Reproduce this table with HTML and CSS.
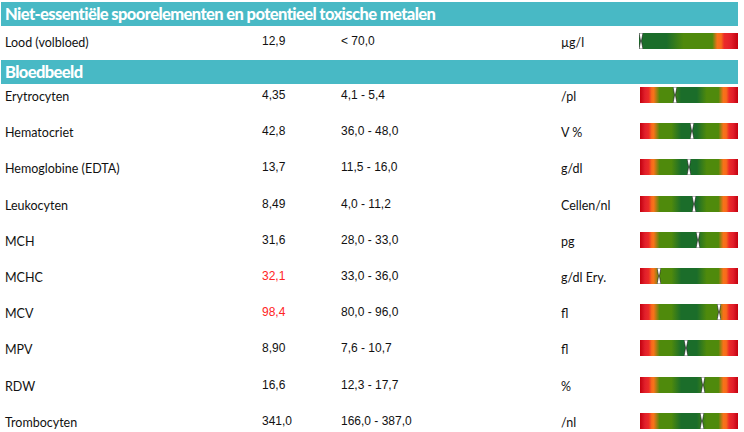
FILE: index.html
```html
<!DOCTYPE html>
<html lang="nl">
<head>
<meta charset="utf-8">
<title>Bloedbeeld</title>
<link rel="stylesheet" href="styles.css">
</head>
<body>
<div class="report">
  <div class="section-head">Niet-essentiële spoorelementen en potentieel toxische metalen</div>
  <div class="row row-first">
    <div class="label">Lood (volbloed)</div>
    <div class="value">12,9</div>
    <div class="range">&lt; 70,0</div>
    <div class="unit">µg/l</div>
    <div class="bar bar-upper"><span class="marker" style="left:2%"><svg viewBox="0 0 4 16" width="4" height="16"><polygon points="0,0 4,0 2.4,8 4,16 0,16 1.6,8" fill="#fff" stroke="#1a1a1a" stroke-width="0.6"/></svg></span></div>
  </div>

  <div class="section-head">Bloedbeeld</div>
  <div class="row">
    <div class="label">Erytrocyten</div>
    <div class="value">4,35</div>
    <div class="range">4,1 - 5,4</div>
    <div class="unit">/pl</div>
    <div class="bar"><span class="marker" style="left:36%"><svg viewBox="0 0 4 16" width="4" height="16"><polygon points="0,0 4,0 2.4,8 4,16 0,16 1.6,8" fill="#fff" stroke="#1a1a1a" stroke-width="0.6"/></svg></span></div>
  </div>
  <div class="row">
    <div class="label">Hematocriet</div>
    <div class="value">42,8</div>
    <div class="range">36,0 - 48,0</div>
    <div class="unit">V %</div>
    <div class="bar"><span class="marker" style="left:53%"><svg viewBox="0 0 4 16" width="4" height="16"><polygon points="0,0 4,0 2.4,8 4,16 0,16 1.6,8" fill="#fff" stroke="#1a1a1a" stroke-width="0.6"/></svg></span></div>
  </div>
  <div class="row">
    <div class="label">Hemoglobine (EDTA)</div>
    <div class="value">13,7</div>
    <div class="range">11,5 - 16,0</div>
    <div class="unit">g/dl</div>
    <div class="bar"><span class="marker" style="left:50%"><svg viewBox="0 0 4 16" width="4" height="16"><polygon points="0,0 4,0 2.4,8 4,16 0,16 1.6,8" fill="#fff" stroke="#1a1a1a" stroke-width="0.6"/></svg></span></div>
  </div>
  <div class="row">
    <div class="label">Leukocyten</div>
    <div class="value">8,49</div>
    <div class="range">4,0 - 11,2</div>
    <div class="unit">Cellen/nl</div>
    <div class="bar"><span class="marker" style="left:55%"><svg viewBox="0 0 4 16" width="4" height="16"><polygon points="0,0 4,0 2.4,8 4,16 0,16 1.6,8" fill="#fff" stroke="#1a1a1a" stroke-width="0.6"/></svg></span></div>
  </div>
  <div class="row">
    <div class="label">MCH</div>
    <div class="value">31,6</div>
    <div class="range">28,0 - 33,0</div>
    <div class="unit">pg</div>
    <div class="bar"><span class="marker" style="left:59%"><svg viewBox="0 0 4 16" width="4" height="16"><polygon points="0,0 4,0 2.4,8 4,16 0,16 1.6,8" fill="#fff" stroke="#1a1a1a" stroke-width="0.6"/></svg></span></div>
  </div>
  <div class="row">
    <div class="label">MCHC</div>
    <div class="value value-out">32,1</div>
    <div class="range">33,0 - 36,0</div>
    <div class="unit">g/dl Ery.</div>
    <div class="bar"><span class="marker" style="left:19.5%"><svg viewBox="0 0 4 16" width="4" height="16"><polygon points="0,0 4,0 2.4,8 4,16 0,16 1.6,8" fill="#fff" stroke="#1a1a1a" stroke-width="0.6"/></svg></span></div>
  </div>
  <div class="row">
    <div class="label">MCV</div>
    <div class="value value-out">98,4</div>
    <div class="range">80,0 - 96,0</div>
    <div class="unit">fl</div>
    <div class="bar"><span class="marker" style="left:81%"><svg viewBox="0 0 4 16" width="4" height="16"><polygon points="0,0 4,0 2.4,8 4,16 0,16 1.6,8" fill="#fff" stroke="#1a1a1a" stroke-width="0.6"/></svg></span></div>
  </div>
  <div class="row">
    <div class="label">MPV</div>
    <div class="value">8,90</div>
    <div class="range">7,6 - 10,7</div>
    <div class="unit">fl</div>
    <div class="bar"><span class="marker" style="left:47%"><svg viewBox="0 0 4 16" width="4" height="16"><polygon points="0,0 4,0 2.4,8 4,16 0,16 1.6,8" fill="#fff" stroke="#1a1a1a" stroke-width="0.6"/></svg></span></div>
  </div>
  <div class="row">
    <div class="label">RDW</div>
    <div class="value">16,6</div>
    <div class="range">12,3 - 17,7</div>
    <div class="unit">%</div>
    <div class="bar"><span class="marker" style="left:64%"><svg viewBox="0 0 4 16" width="4" height="16"><polygon points="0,0 4,0 2.4,8 4,16 0,16 1.6,8" fill="#fff" stroke="#1a1a1a" stroke-width="0.6"/></svg></span></div>
  </div>
  <div class="row">
    <div class="label">Trombocyten</div>
    <div class="value">341,0</div>
    <div class="range">166,0 - 387,0</div>
    <div class="unit">/nl</div>
    <div class="bar"><span class="marker" style="left:63%"><svg viewBox="0 0 4 16" width="4" height="16"><polygon points="0,0 4,0 2.4,8 4,16 0,16 1.6,8" fill="#fff" stroke="#1a1a1a" stroke-width="0.6"/></svg></span></div>
  </div>
</div>
</body>
</html>
```

FILE: styles.css
```css
html, body {
  margin: 0;
  padding: 0;
  background: #fff;
}

.report {
  width: 737px;
  margin-left: 1px;
  padding-top: 2px;
  font-family: Lato, "Noto Sans", sans-serif;
  color: #111;
}

.section-head {
  height: 24px;
  line-height: 25px;
  background: #48b9c5;
  color: #fff;
  font-weight: 900;
  font-size: 16.5px;
  letter-spacing: -0.6px;
  padding-left: 4px;
  white-space: nowrap;
  overflow: hidden;
}

.row {
  display: grid;
  grid-template-columns: 257px 79px 220px 79px 98px;
  align-items: start;
  height: 36.2px;
  box-sizing: border-box;
  padding-top: 3px;
  padding-left: 4px;
}

.row-first {
  height: 34px;
  padding-top: 7px;
}

.label,
.unit {
  font-size: 12.5px;
  line-height: 16px;
  padding-top: 2px;
}

.value,
.range {
  font-family: "Liberation Sans", Arial, sans-serif;
  font-size: 12px;
  line-height: 16px;
  color: #111;
}

.value-out {
  color: #ff2424;
}

.bar {
  position: relative;
  height: 16px;
  background: linear-gradient(to right,
    #c2000e 0%, #e11f2b 5%, #ec2b28 9%, #f76b1b 12%, #f7721a 14%,
    #4f8a0c 20%, #4f8a0c 32%, #1b6d2a 42%, #1b6d2a 58%,
    #4f8a0c 68%, #4f8a0c 80%, #f7721a 85%, #f76b1b 88%,
    #ec2b28 91%, #e11f2b 95%, #c2000e 100%);
}

.bar-upper {
  margin-left: -1px;
  background: linear-gradient(to right,
    #1b6d2a 0%, #1b6d2a 28%, #4f8a0c 45%, #4f8a0c 74%,
    #f7721a 79%, #f76b1b 83%, #ec2b28 86%, #e11f2b 93%, #c2000e 100%);
}

.marker {
  position: absolute;
  top: 0;
  width: 4px;
  height: 16px;
  margin-left: -2px;
}

.marker svg {
  display: block;
}
```
